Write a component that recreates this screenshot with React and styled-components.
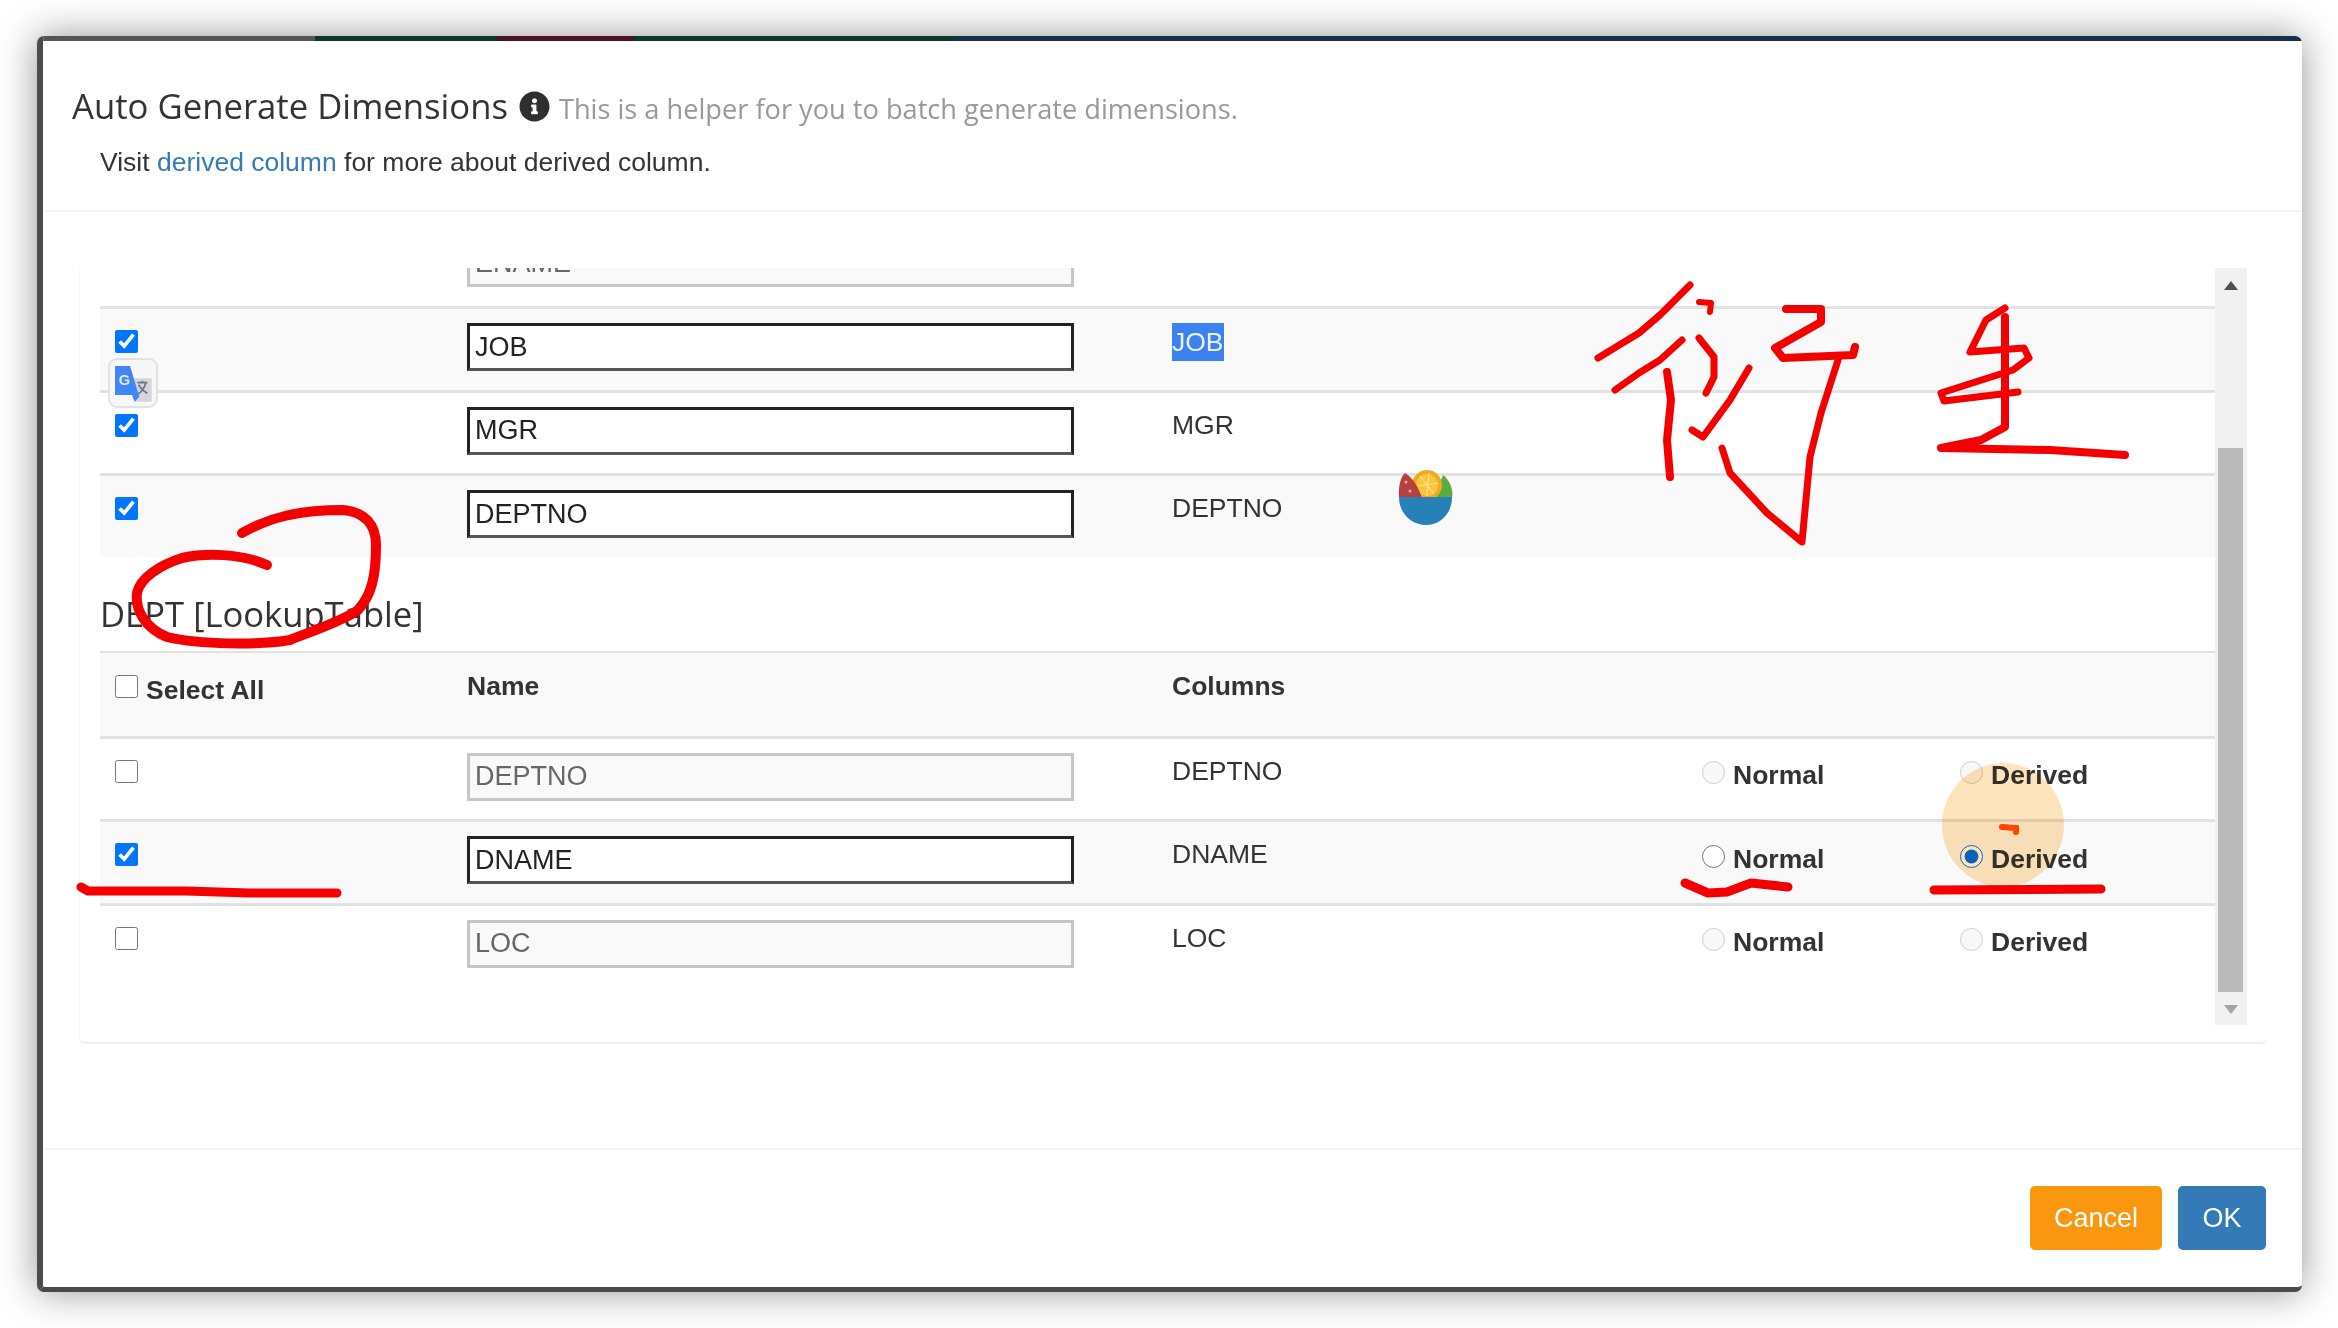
import styled, { createGlobalStyle } from "styled-components";
import { FaInfoCircle } from "react-icons/fa";

const GlobalStyle = createGlobalStyle`
  *, *::before, *::after {
    box-sizing: border-box;
    margin: 0;
    padding: 0;
  }

  html, body {
    background: #fff;
    overflow: hidden;
  }

  body {
    font-family: "Liberation Sans", Arial, sans-serif;
    color: #333;
  }
`;

const Page = styled.div`
  position: relative;
  width: 2338px;
  height: 1328px;
  padding: 36px 36px 36px 37px;
`;

const Modal = styled.div`
  display: flex;
  flex-direction: column;
  height: 1256px;
  background: #fff;
  border-left: 6px solid #4c4c4c;
  border-bottom: 5px solid #4a4a4a;
  border-radius: 7px;
  box-shadow: 0 0 38px rgba(0, 0, 0, 0.42);
  overflow: hidden;
`;

const TopStrip = styled.div`
  height: 5px;
  flex: none;
  background: linear-gradient(
    90deg,
    #555 0 272px,
    #10352a 272px 454px,
    #4a1228 454px 591px,
    #10352a 591px 910px,
    #163049 910px 100%
  );
`;

const Header = styled.header`
  height: 171px;
  flex: none;
  padding-top: 43px;
  border-bottom: 2px solid #f5f5f5;
`;

const TitleRow = styled.div`
  display: flex;
  align-items: baseline;
  padding-left: 29px;
  height: 44px;
`;

const Title = styled.h4`
  font-family: "Open Sans", sans-serif;
  font-size: 34.7px;
  font-weight: 400;
  line-height: 44px;
  color: #333;
`;

const InfoIcon = styled(FaInfoCircle)`
  width: 31px;
  height: 31px;
  margin: 0 9px 0 11px;
  color: #2f2f2f;
  align-self: center;
`;

const Hint = styled.small`
  font-family: "Open Sans", sans-serif;
  font-size: 27.2px;
  color: #999;
`;

const VisitLine = styled.p`
  padding-left: 57px;
  margin-top: 16px;
  font-size: 26.5px;
  line-height: 36px;
  color: #333;
`;

const DocLink = styled.a`
  color: #337ab7;
`;

const Body = styled.div`
  flex: 1;
  padding: 56px 35px 0 36px;
`;

const Panel = styled.div`
  display: flex;
  align-items: flex-start;
  height: 776px;
  padding: 0 20px 0 20px;
  border-left: 1px solid #f6f6f6;
  border-bottom: 2px solid #efefef;
  border-radius: 0 0 6px 6px;
`;

const TableArea = styled.div`
  flex: 1;
  height: 757px;
  overflow: hidden;
`;

const ClippedRow = styled.div`
  height: 38px;
  padding-left: 367px;
  display: flex;
  align-items: flex-end;
  padding-bottom: 19px;
  overflow: hidden;
`;

const Row = styled.div`
  display: grid;
  grid-template-columns: 367px 705px 530px 258px 1fr;
  height: ${(p) => p.$height || "83.5px"};
  border-top: ${(p) => (p.$thin ? "2px" : "3px")} solid #e2e2e2;
  background: ${(p) => (p.$striped ? "#f9f9f9" : "#fff")};
`;

const CheckCell = styled.div`
  display: flex;
  align-items: flex-start;
  padding: 21px 0 0 15px;
`;

const Check = styled.input.attrs({ type: "checkbox" })`
  width: 23px;
  height: 23px;
  flex: none;
  margin: 0;
`;

const InputCell = styled.div`
  padding-top: 14px;
`;

const NameInput = styled.input`
  display: block;
  width: 607px;
  height: 48px;
  padding: 0 0 0 5px;
  font-family: "Liberation Sans", Arial, sans-serif;
  font-size: 27px;
  color: #222;
  background: #fff;
  border: 3px solid #222;
  border-bottom-color: #555;
  outline: none;

  &:disabled {
    color: #666;
    background: #f9f9f9;
    border-color: #c6c6c6;
    opacity: 1;
  }
`;

const ColumnText = styled.div`
  padding-top: 12px;
  font-size: 26.5px;
  line-height: 40px;
  color: #333;
`;

const Selected = styled.span`
  display: inline-block;
  height: 38px;
  line-height: 38px;
  margin-top: 2px;
  background: #3b82f0;
  color: #eaf2ff;
`;

const RadioLabel = styled.label`
  display: flex;
  align-items: flex-start;
  padding-top: 22.5px;
  font-size: 26.5px;
  font-weight: 700;
  line-height: 28px;
  color: #333;
`;

const Radio = styled.input.attrs({ type: "radio" })`
  width: 23px;
  height: 23px;
  flex: none;
  margin: 0 8px 0 0;
  accent-color: #0a6cff;
`;

const SectionTitle = styled.h4`
  height: 94.5px;
  padding-top: 35px;
  font-family: "Open Sans", sans-serif;
  font-size: 34.6px;
  font-weight: 400;
  line-height: 44px;
  color: #333;
`;

const HeadLabel = styled.div`
  padding-top: 13px;
  font-size: 26.5px;
  font-weight: 700;
  line-height: 40px;
  color: #333;
`;

const SelectAll = styled.label`
  display: flex;
  align-items: flex-start;
  padding: 21px 0 0 15px;
  font-size: 26.5px;
  font-weight: 700;
  line-height: 32px;
  color: #333;
`;

const SelectAllBox = styled(Check)`
  margin: 1px 8px 0 0;
`;

const Scrollbar = styled.div`
  display: grid;
  grid-template-rows: 180px 544px 33px;
  width: 32px;
  flex: none;
  background: #f1f1f1;
`;

const ArrowUp = styled.div`
  width: 0;
  height: 0;
  margin: 13px auto 0;
  border-left: 7px solid transparent;
  border-right: 7px solid transparent;
  border-bottom: 9px solid #505050;
`;

const ArrowDown = styled.div`
  width: 0;
  height: 0;
  margin: 13px auto 0;
  border-left: 7px solid transparent;
  border-right: 7px solid transparent;
  border-top: 9px solid #a3a3a3;
`;

const Thumb = styled.div`
  margin: 0 4px 0 3px;
  background: #bababa;
`;

const Footer = styled.footer`
  display: flex;
  justify-content: flex-end;
  gap: 16px;
  height: 139px;
  flex: none;
  padding: 36px 36px 0 0;
  border-top: 2px solid #f5f5f5;
`;

const Button = styled.button`
  height: 64px;
  min-width: 88px;
  padding: 0 24px;
  font-family: "Liberation Sans", Arial, sans-serif;
  font-size: 27px;
  color: #fff;
  background: ${(p) => p.$bg};
  border: none;
  border-radius: 5px;
`;

const TranslateBadge = styled.div`
  position: absolute;
  left: 108px;
  top: 358px;
  width: 50px;
  height: 50px;
  background: #f7f7f7;
  border: 2px solid #e2e2e2;
  border-radius: 9px;
`;

const FruitBowl = styled.svg`
  position: absolute;
  left: 1396px;
  top: 468px;
`;

const Annotations = styled.svg`
  position: absolute;
  left: 0;
  top: 0;
  pointer-events: none;
`;

const Glow = styled.ellipse`
  mix-blend-mode: multiply;
`;

const upperRows = [
  { name: "JOB", selected: true, striped: true },
  { name: "MGR" },
  { name: "DEPTNO", striped: true },
];

const lookupRows = [
  { name: "DEPTNO", disabled: true },
  { name: "DNAME", striped: true },
  { name: "LOC", disabled: true },
];

const inkStrokes = [
  { d: "M1690 285 L1660 315 L1639 333 L1598 358", w: 7 },
  { d: "M1699 302 L1711 303 L1710 312", w: 6 },
  { d: "M1682 340 L1660 360 L1639 373 L1615 390", w: 7 },
  { d: "M1667 372 L1671 400 L1667 440 L1670 477", w: 8 },
  { d: "M1699 338 L1714 357 L1714 377 L1706 393", w: 7 },
  { d: "M1749 368 L1730 400 L1703 437 L1692 430", w: 7 },
  { d: "M1786 309 L1821 309 L1821 322 L1775 348 L1783 358 L1853 355 L1855 347", w: 8 },
  { d: "M1839 357 L1821 413 L1810 457 L1802 542 L1767 513 L1730 473 L1722 448", w: 7 },
  { d: "M2005 308 L1986 320 L1970 352 L2024 348 L2029 358 L2013 370 L1941 393 L1944 401 L2018 392", w: 7 },
  { d: "M2005 317 L2005 427 L1981 440 L1941 448 L2050 450 L2125 455", w: 8 },
  {
    d: "M242 533 C270 517 300 510 343 510 C365 512 376 525 376 545 C376 575 372 595 358 610 C345 620 310 632 290 640 C260 645 200 645 167 637 C145 628 135 610 137 593 C140 578 160 565 182 558 C205 553 240 553 267 565",
    w: 10,
  },
  { d: "M81 887 L88 891 L186 891 L249 893 L337 893", w: 9 },
  { d: "M1685 883 L1708 893 L1727 892 L1751 883 L1788 887", w: 9 },
  { d: "M1934 890 L2101 889", w: 9 },
];

function TableRow({ name, disabled, striped, selected, radios }) {
  return (
    <Row $striped={striped}>
      <CheckCell>
        <Check defaultChecked={!disabled} />
      </CheckCell>
      <InputCell>
        <NameInput defaultValue={name} disabled={disabled} />
      </InputCell>
      <ColumnText>{selected ? <Selected>{name}</Selected> : name}</ColumnText>
      {radios && (
        <>
          <RadioLabel>
            <Radio name={name} disabled={disabled} />
            Normal
          </RadioLabel>
          <RadioLabel>
            <Radio name={name} disabled={disabled} defaultChecked={!disabled} />
            Derived
          </RadioLabel>
        </>
      )}
    </Row>
  );
}

function App() {
  return (
    <>
      <GlobalStyle />
      <Page>
        <Modal>
          <TopStrip />
          <Header>
            <TitleRow>
              <Title>Auto Generate Dimensions</Title>
              <InfoIcon />
              <Hint>This is a helper for you to batch generate dimensions.</Hint>
            </TitleRow>
            <VisitLine>
              Visit <DocLink>derived column</DocLink> for more about derived column.
            </VisitLine>
          </Header>

          <Body>
            <Panel>
              <TableArea>
                <ClippedRow>
                  <NameInput defaultValue="ENAME" disabled />
                </ClippedRow>
                {upperRows.map((row) => (
                  <TableRow key={row.name} {...row} />
                ))}
                <SectionTitle>DEPT [LookupTable]</SectionTitle>
                <Row $striped $thin $height="84.5px">
                  <SelectAll>
                    <SelectAllBox />
                    Select All
                  </SelectAll>
                  <HeadLabel>Name</HeadLabel>
                  <HeadLabel>Columns</HeadLabel>
                </Row>
                {lookupRows.map((row) => (
                  <TableRow key={row.name} {...row} radios />
                ))}
              </TableArea>
              <Scrollbar>
                <div>
                  <ArrowUp />
                </div>
                <Thumb />
                <div>
                  <ArrowDown />
                </div>
              </Scrollbar>
            </Panel>
          </Body>

          <Footer>
            <Button $bg="#fb970e">Cancel</Button>
            <Button $bg="#337ab7">OK</Button>
          </Footer>
        </Modal>

        <TranslateBadge>
          <svg width="46" height="46" viewBox="30 30 138 138">
            <path d="M100 85 H155 V155 H105 Z" fill="#d4d6da" />
            <path d="M112 98 H142 M127 92 V98 M138 98 Q130 122 114 132 M116 104 Q124 120 142 130" stroke="#6b7280" strokeWidth="5" fill="none" />
            <path d="M45 48 H90 L118 140 L104 155 L96 135 H45 Z" fill="#4285f4" />
            <text x="56" y="106" fontFamily="Liberation Sans, sans-serif" fontSize="44" fontWeight="700" fill="#dfe9fd">G</text>
          </svg>
        </TranslateBadge>

        <FruitBowl width="60" height="60" viewBox="0 0 60 60">
          <path d="M40 30 C42 20 45 12 47 7 C53 11 58 22 56 30 Z" fill="#58ad3f" />
          <circle cx="31" cy="17" r="15" fill="#f2a922" />
          <circle cx="31" cy="17" r="11" fill="#f9c53c" />
          <path d="M24 8 L38 26 M33 5 L31 28 M22 18 L42 15" stroke="#fce28c" strokeWidth="1.2" />
          <path d="M3 30 C2 18 5 8 9 5 C16 9 22 18 26 30 Z" fill="#b5413f" />
          <circle cx="10" cy="14" r="1.6" fill="#e8a0a0" />
          <circle cx="14" cy="23" r="1.6" fill="#e8a0a0" />
          <path d="M3 29 H56 C56 46 44 57 30 57 C16 57 3 46 3 29 Z" fill="#2581b8" />
        </FruitBowl>

        <Annotations width="2338" height="1328" viewBox="0 0 2338 1328">
          <Glow cx="2003" cy="825" rx="61" ry="62" fill="#fee4bc" />
          {inkStrokes.map((s) => (
            <path
              key={s.d}
              d={s.d}
              fill="none"
              stroke="#f40000"
              strokeWidth={s.w}
              strokeLinecap="round"
              strokeLinejoin="round"
            />
          ))}
          <path d="M2002 827 L2016 828 L2016 832" fill="none" stroke="#ff4400" strokeWidth="6" strokeLinecap="round" />
        </Annotations>
      </Page>
    </>
  );
}

export default App;
